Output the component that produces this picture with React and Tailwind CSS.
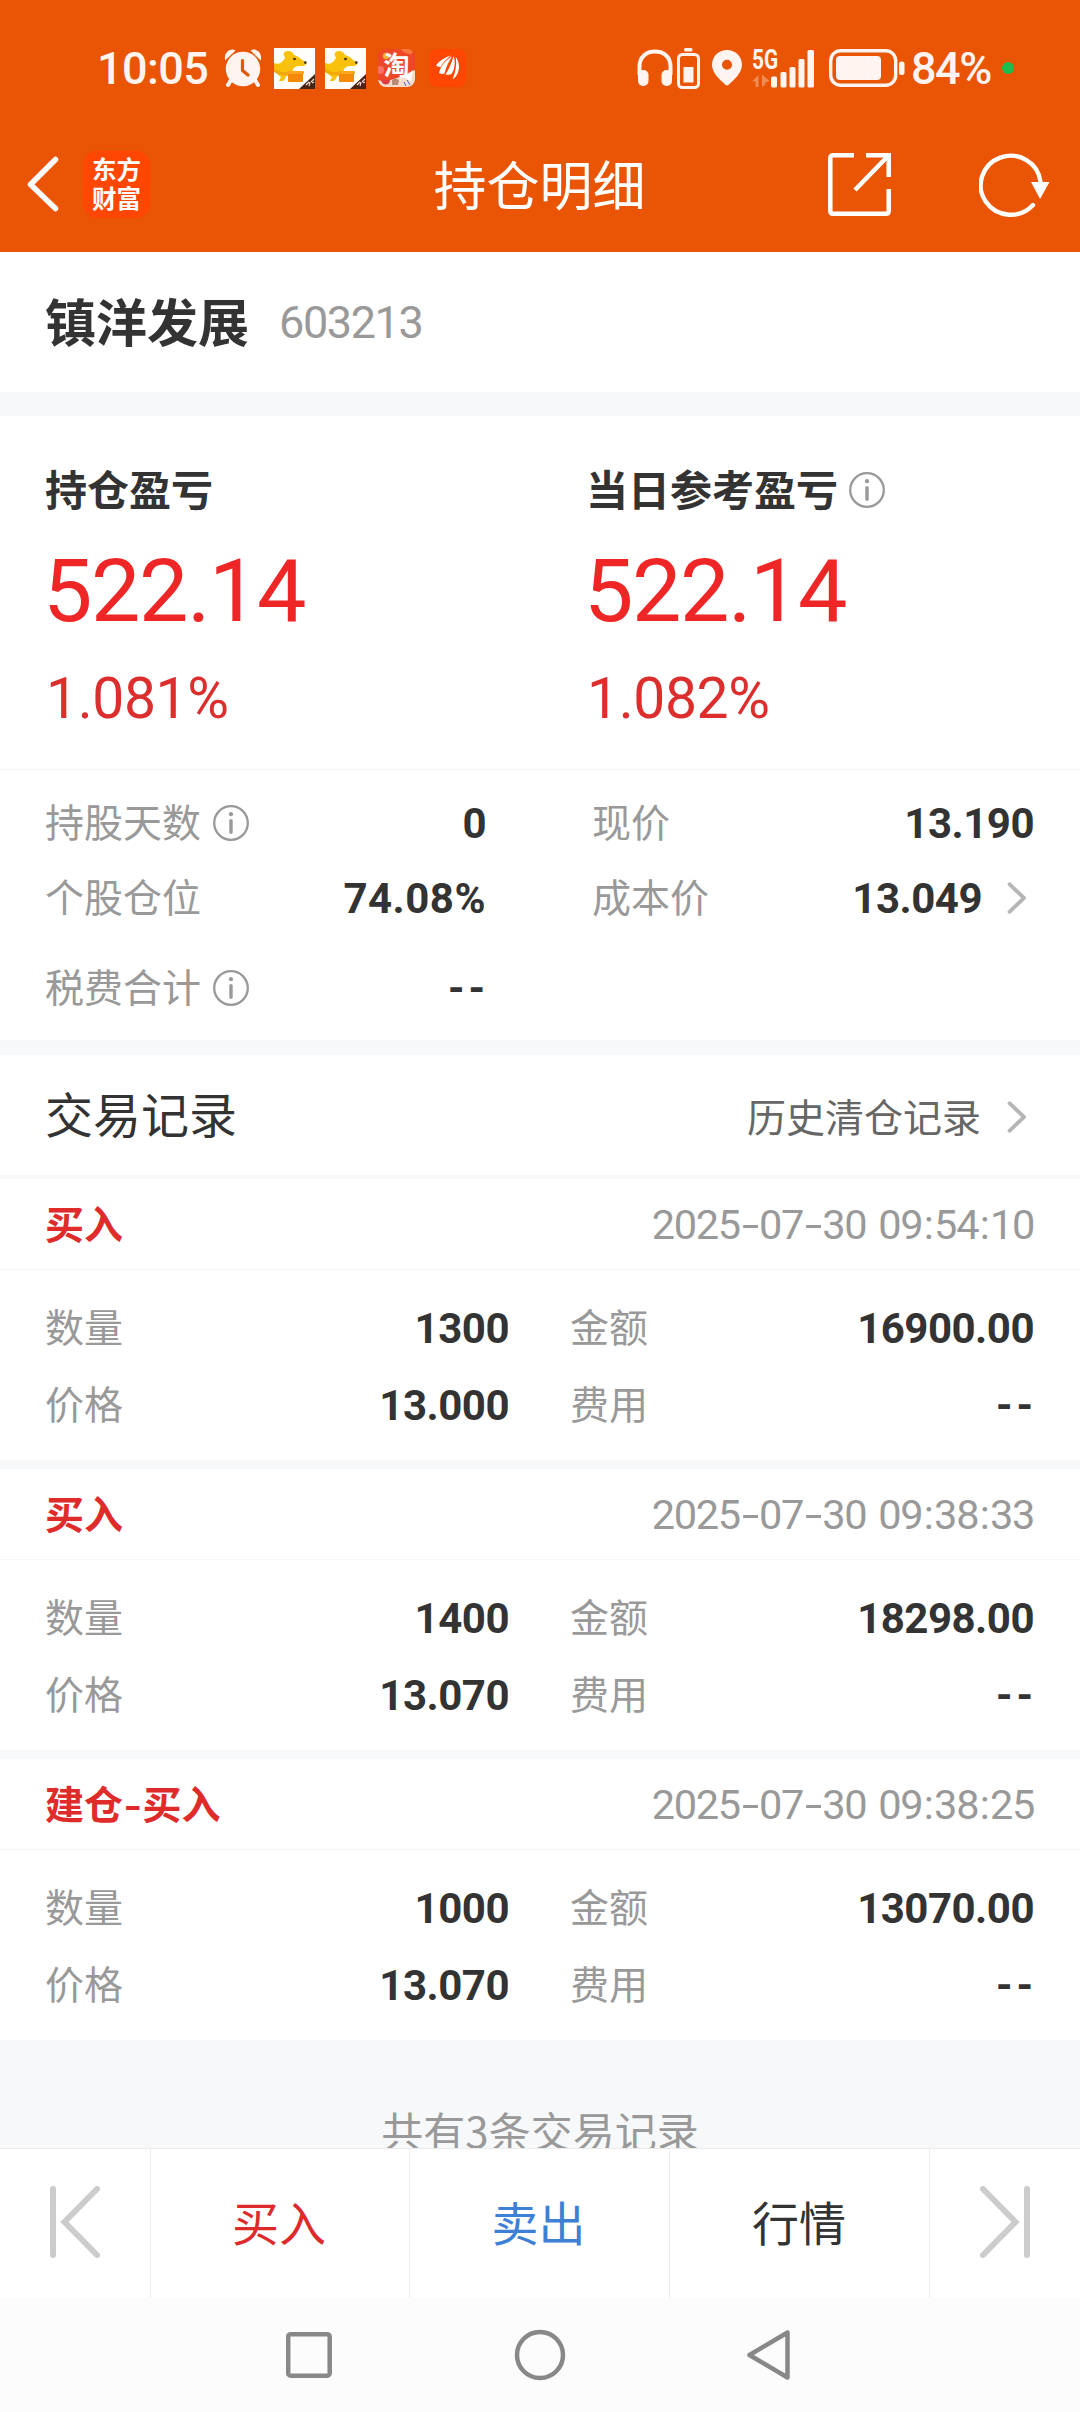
import clsx from 'clsx';

const records = [
  { id: 1, type: '买入', time: '2025-07-30 09:54:10', count: '1300', amount: '16900.00', price: '13.000', fee: '--' },
  { id: 2, type: '买入', time: '2025-07-30 09:38:33', count: '1400', amount: '18298.00', price: '13.070', fee: '--' },
  { id: 3, type: '建仓-买入', time: '2025-07-30 09:38:25', count: '1000', amount: '13070.00', price: '13.070', fee: '--' },
];

const InfoIcon = ({ className }) => (
  <svg className={clsx('h-9 w-9 shrink-0', className)} viewBox="0 0 36 36" fill="none" stroke="#999999">
    <circle cx="18" cy="18" r="16.8" strokeWidth="2.3" />
    <circle cx="18" cy="9.2" r="2.1" fill="#999999" stroke="none" />
    <path d="M18 15.6v11.6" strokeWidth="3.4" strokeLinecap="round" />
  </svg>
);

const Chevron = () => (
  <svg className="h-8 w-5 shrink-0" viewBox="0 0 20 32" fill="none" stroke="#b5b5b5" strokeWidth="3.8" strokeLinecap="round" strokeLinejoin="round">
    <path d="M2.5 2.2L17 16 2.5 29.8" />
  </svg>
);

const DogIcon = ({ className }) => (
  <svg className={clsx('h-[41px] w-[41px]', className)} viewBox="0 0 41 41">
    <rect width="41" height="41" fill="#fffefa" />
    <path d="M0 15c5 2 8 0 11-5L9.500 6.500C10 3.500 12 2.500 15 3c3 .5 4 2 5 4 4 1 6 3 8 5l4 2c1 2-1 4-4 4-4 0-6 0-8 2-2 2-2 4 1 5l-4 3-4-1c-2 3-2 4-4 6H5l2-4c-3-2-5-4-7-7z" fill="#f8c20c" />
    <path d="M0 20c6 5 10 4 15 4v4l-5-1c-4 0-7-1-10-3z" fill="#f0a90a" />
    <circle cx="20.5" cy="11" r="1.3" fill="#3b2a14" />
    <circle cx="31.3" cy="14.6" r="1.3" fill="#3b2a14" />
    <rect x="14" y="24" width="15" height="10" rx="1" fill="#f58a08" />
    <rect x="13" y="23" width="17" height="3" rx="1" fill="#fba41c" />
    <path d="M41 26v15H25z" fill="#4a2413" />
    <path d="M32 37l3-3m0 4l1-4m1 0l3-3m-2 4l2-1" stroke="#f3e4da" strokeWidth="1.1" fill="none" />
  </svg>
);

const TaobaoIcon = () => (
  <div className="relative ml-3 flex h-[38px] w-[37px] justify-center rounded-[8px] bg-[#ee4628]">
    <svg className="absolute inset-0 h-full w-full rounded-[8px]" viewBox="0 0 37 38">
      <circle cx="8" cy="7" r="3.2" fill="#f9b233" />
      <path d="M23 0h11c2 3 0 6-3 5s-6-1-8-5z" fill="#f7773b" />
      <circle cx="2" cy="21" r="4" fill="#f7706a" />
      <path d="M0 31c7 3 15-1 19-2l18-8v17H0z" fill="#f5dccb" />
      <path d="M3 31h9c0 6-8 6-9 0z" fill="#e23b46" />
      <path d="M14 31l3-2 4 2-1 5h-6z" fill="#b98b74" />
      <path d="M26 29l9-8-2 11z" fill="#fff" />
      <path d="M26 33l2 4m1-6l3 5" stroke="#4b63b8" strokeWidth="1" />
    </svg>
    <span className="relative font-['Noto_Sans_CJK_SC',sans-serif] text-[26px] leading-[30px] font-bold text-white">淘</span>
  </div>
);

const StatusBar = () => (
  <div className="flex h-[136px] items-center pl-[97px] text-[#fff4ef]">
    <span className="w-[113px] font-['Roboto',sans-serif] text-[45px] leading-none font-medium tracking-[-0.6px]">10:05</span>
    <svg className="ml-3.5 h-[38px] w-[38px]" viewBox="0 0 38 38" fill="currentColor">
      <circle cx="19" cy="20" r="17.2" />
      <path d="M1.2 11.5C-.8 3 7-1.5 11.5 1.5zM36.8 11.5C38.8 3 31-1.5 26.5 1.5z" />
      <path d="M7 31l-3 5m27-5l3 5" stroke="currentColor" strokeWidth="4" strokeLinecap="round" />
      <path d="M18.5 11.5v10l5.5 4.5" fill="none" stroke="#e95504" strokeWidth="3.2" strokeLinecap="round" strokeLinejoin="round" />
    </svg>
    <DogIcon className="ml-3" />
    <DogIcon className="ml-2.5" />
    <TaobaoIcon />
    <svg className="ml-3.5 h-[38px] w-[37px]" viewBox="0 0 37 38">
      <rect width="37" height="38" rx="8" fill="#ff4602" />
      <g fill="#fff">
        <path d="M22 6.5C16 8 10 12 7 16.5q2 1.5 4.5 1.5C14 13.5 17 10.5 22 6.500z" />
        <path d="M23 7.5C16.5 11 11.5 17 10 24q3 1.5 5.5.5C17 18 20 12 23 7.5z" />
        <path d="M24.5 7C23 13 20 20 16.5 25.5q4 1 6.500-1C26 19 26.5 12 24.5 7z" />
        <path d="M26.5 7.5C28 14 27 22 23.5 30.5 31 26 32 14 26.5 7.5z" />
      </g>
    </svg>

    <svg className="ml-[171px] h-[38px] w-[36px]" viewBox="0 0 36 38" fill="currentColor">
      <path d="M2.5 26V17.5C2.5 8 9 2.5 18 2.5S33.5 8 33.5 17.5V26" fill="none" stroke="currentColor" strokeWidth="4" />
      <rect x="1" y="21" width="10.5" height="16" rx="5" />
      <rect x="24.5" y="21" width="10.5" height="16" rx="5" />
    </svg>
    <svg className="ml-1 h-[41px] w-[23px]" viewBox="0 0 23 41" fill="currentColor">
      <rect x="7" width="8.5" height="3.5" rx="1.5" />
      <rect x="1.5" y="6.5" width="20" height="33" rx="4" fill="none" stroke="currentColor" strokeWidth="3" />
      <rect x="6.5" y="19" width="10" height="15.5" />
    </svg>
    <svg className="ml-3 h-9 w-[30px]" viewBox="0 0 30 36" fill="currentColor">
      <path fillRule="evenodd" d="M15 0C6.5 0 0 6.5 0 15c0 8.5 9 15.5 13 19.5q2 1.8 4 0C21 30.5 30 23.5 30 15 30 6.5 23.5 0 15 0zm0 9.800a5 5 0 1 1 0 10 5 5 0 0 1 0-10z" />
    </svg>
    <div className="relative ml-2.5 h-[39px] w-[64px]">
      <span className="absolute top-[-2px] left-0 origin-left scale-x-[0.77] font-['Roboto',sans-serif] text-[27px] leading-none font-bold">5G</span>
      <svg className="h-full w-full" viewBox="0 0 64 39" fill="currentColor">
        <path d="M0 32.5L6.5 26v12H3.5v-5.500zM17.5 32L10 25.5V38l3.5-2.5v-2z" opacity=".35" />
        <rect x="19" y="27.5" width="6" height="11" rx="1.5" />
        <rect x="28.5" y="23" width="6" height="15.5" rx="1.5" />
        <rect x="37.5" y="18" width="6" height="20.5" rx="1.5" />
        <rect x="46.5" y="10" width="6" height="28.5" rx="1.5" />
        <rect x="55.5" y="1" width="6.5" height="37.5" rx="1.5" />
      </svg>
    </div>
    <svg className="ml-[13px] h-[38px] w-[76px]" viewBox="0 0 76 38" fill="currentColor">
      <rect x="1.7" y="1.7" width="65" height="34.6" rx="10" fill="none" stroke="currentColor" strokeWidth="3.4" />
      <rect x="7" y="7" width="45" height="24" rx="4" />
      <rect x="70" y="12.5" width="5.5" height="13.5" rx="2.5" />
    </svg>
    <span className="ml-[6px] w-[79px] font-['Roboto',sans-serif] text-[45px] leading-none font-medium tracking-[-1.5px]">84%</span>
    <span className="ml-[12px] h-3 w-3 shrink-0 rounded-full bg-[#1cbf4f]" />
  </div>
);

const NavHeader = () => (
  <div className="grid h-[116px] grid-cols-[1fr_auto_1fr] items-start">
    <div className="flex pt-[15px] pl-[27px]">
      <svg className="mt-[5px] h-14 w-8" viewBox="0 0 32 56" fill="none" stroke="#fff" strokeWidth="5.5" strokeLinecap="round" strokeLinejoin="round">
        <path d="M28.5 3.5L3.5 28.5l25 24" />
      </svg>
      <div className="ml-6 flex h-[67px] w-[67px] flex-col items-center justify-center rounded-[14px] bg-[#ff4602] pb-1 font-['Noto_Sans_CJK_SC',sans-serif] text-[24.5px] leading-[29px] font-bold text-white">
        <span>东方</span>
        <span>财富</span>
      </div>
    </div>
    <h1 className="-ml-px pt-[21px] font-['Noto_Sans_CJK_SC',sans-serif] text-[53px] leading-[53px] text-white">持仓明细</h1>
    <div className="flex justify-end pt-[17px] pr-[30px]">
      <svg className="h-[63px] w-[63px]" viewBox="0 0 63 63" fill="none" stroke="#fff" strokeWidth="4.5">
        <path d="M26 2.3H5Q2.3 2.3 2.3 5v53q0 2.7 2.7 2.7h53q2.7 0 2.7-2.7V36" />
        <path d="M38 2.3h22.7V24M59.5 3.5L27 37" />
      </svg>
      <svg className="ml-[88px] h-16 w-[71px]" viewBox="0 0 71 64" fill="none">
        <path d="M61.5 29A30 29.5 0 1 0 54 52" stroke="#fff" strokeWidth="4.4" strokeLinecap="round" />
        <path d="M52 29h18.5L61 46z" fill="#fff" />
      </svg>
    </div>
  </div>
);

const Profit = ({ title, value, percent, info }) => (
  <div className="flex flex-col items-start">
    <div className="flex h-[42px] items-center">
      <span className="pb-1 font-['Noto_Sans_CJK_SC',sans-serif] text-[42px] leading-[42px] font-bold text-[#333333]">{title}</span>
      {info && <InfoIcon className="ml-[11px]" />}
    </div>
    <span className="mt-9 -ml-0.5 text-[88px] leading-[88px] tracking-[-1.4px] text-[#ee2626]">{value}</span>
    <span className="mt-[35px] ml-px text-[57px] leading-[57px] tracking-[-0.4px] text-[#dd2e2e]">{percent}</span>
  </div>
);

const valueTracking = (value) => {
  if (value === '--') return 'pt-[2px] tracking-[4px] -mr-[3px]';
  if (value.endsWith('%')) return 'pt-px tracking-[0.5px]';
  return 'pt-px tracking-[-0.5px]';
};

const Field = ({ label, value, info, arrow, className }) => (
  <div className={clsx('flex h-[42px] items-center', className)}>
    <span className="pb-1.5 font-['Noto_Sans_CJK_SC',sans-serif] text-[39px] leading-[39px] text-[#999999]">{label}</span>
    {info && <InfoIcon className="ml-3" />}
    <span className={clsx('ml-auto text-[42px] leading-[42px] font-bold text-[#333333]', valueTracking(value))}>{value}</span>
    {arrow && (
      <span className="mr-[7px] ml-[25px]">
        <Chevron />
      </span>
    )}
  </div>
);

// dashes and colons get a little more room than the digits
const TradeTime = ({ time }) => (
  <span className="text-[41.5px] leading-[41px] tracking-[-1.3px] whitespace-pre text-[#999999]">
    {time.split(/([-: ])/).map((part, i) => (
      <span key={i} className={clsx(part === '-' && 'inline-block scale-x-150 px-[4.5px]', (part === ':' || part === ' ') && 'px-[1.5px]')}>
        {part}
      </span>
    ))}
  </span>
);

const TradeRecord = ({ record, last }) => (
  <div className={clsx('bg-white', last ? 'h-[281px]' : 'h-[290px] border-b-[9px] border-[#f6f8fa]')}>
    <div className="flex h-[91px] items-center justify-between border-b border-[#f5f6f7] pr-[46px] pl-[45px]">
      <span className="pb-1 font-['Noto_Sans_CJK_SC',sans-serif] text-[39px] leading-[39px] font-bold text-[#e02b2b]">
        {record.type.split(/(-)/).map((part, i) => (
          <span key={i} className={clsx(part === '-' && 'inline-block scale-x-125 px-[2.5px]')}>
            {part}
          </span>
        ))}
      </span>
      <TradeTime time={record.time} />
    </div>
    <div className="grid grid-cols-[464px_464px] justify-between gap-y-[35px] pt-[37px] pr-[46px] pl-[45px]">
      <Field label="数量" value={record.count} />
      <Field label="金额" value={record.amount} />
      <Field label="价格" value={record.price} />
      <Field label="费用" value={record.fee} />
    </div>
  </div>
);

const BottomBar = () => (
  <div className="grid h-[150px] shrink-0 grid-cols-[151px_259px_260px_260px_150px] divide-x divide-[#ebebeb] border-t border-[#ebebeb] bg-white font-['Noto_Sans_CJK_SC',sans-serif] text-[47px] leading-[47px]">
    <button className="flex items-center justify-center pb-[3px]">
      <svg className="h-[72px] w-[50px]" viewBox="0 0 50 72" fill="none" stroke="#cccccc" strokeWidth="6" strokeLinecap="round">
        <path d="M3 3v66M47 3L14.5 36 47 69" />
      </svg>
    </button>
    <button className="pr-0.5 pb-1.5 text-[#dd2b2b]">买入</button>
    <button className="pr-0.5 pb-1.5 text-[#3d80d6]">卖出</button>
    <button className="pr-px pb-1.5 text-[#333333]">行情</button>
    <button className="flex items-center justify-center pb-[3px]">
      <svg className="h-[72px] w-[50px]" viewBox="0 0 50 72" fill="none" stroke="#cccccc" strokeWidth="6" strokeLinecap="round">
        <path d="M47 3v66M3 3l32.5 33L3 69" />
      </svg>
    </button>
  </div>
);

const SystemNav = () => (
  <div className="flex h-[114px] shrink-0 items-center bg-[#fcfcfc] pl-[286px]">
    <svg className="h-[52px] w-[46px]" viewBox="0 0 46 52" fill="none" stroke="#888888" strokeWidth="4.5">
      <rect x="2.2" y="5.2" width="41.5" height="41.5" rx="2.5" />
    </svg>
    <svg className="ml-[182px] h-[52px] w-[52px]" viewBox="0 0 52 52" fill="none" stroke="#888888" strokeWidth="4.5">
      <circle cx="26" cy="26" r="23" />
    </svg>
    <svg className="ml-[180px] h-[52px] w-[46px]" viewBox="0 0 46 52" fill="none" stroke="#888888" strokeWidth="4.5" strokeLinejoin="round">
      <path d="M41.5 3.5v45L3.5 26z" />
    </svg>
  </div>
);

export default function App() {
  return (
    <div className="flex h-[2412px] w-[1080px] flex-col overflow-hidden bg-[#f6f8fa] font-['Roboto','Noto_Sans_CJK_SC',sans-serif]">
      <header className="h-[252px] shrink-0 bg-[#e95504]">
        <StatusBar />
        <NavHeader />
      </header>

      <main className="flex min-h-0 flex-1 flex-col overflow-hidden">
        <section className="flex h-[140px] shrink-0 items-center bg-white px-[45px]">
          <h2 className="pb-1 font-['Noto_Sans_CJK_SC',sans-serif] text-[51px] leading-[51px] font-bold text-[#333333]">镇洋发展</h2>
          <span className="ml-[30px] text-[45px] leading-[45px] tracking-[-1.4px] text-[#999999]">603213</span>
        </section>

        <section className="mt-6 h-[624px] shrink-0 bg-white">
          <div className="grid h-[354px] grid-cols-[541px_1fr] border-b border-[#f5f6f7] pt-[53px] pl-[45px]">
            <Profit title="持仓盈亏" value="522.14" percent="1.081%" />
            <Profit title="当日参考盈亏" value="522.14" percent="1.082%" info />
          </div>
          <div className="grid grid-cols-[441px_442px] justify-between pt-8 pr-[46px] pl-[45px]">
            <Field label="持股天数" value="0" info />
            <Field label="现价" value="13.190" />
            <Field className="mt-[33px]" label="个股仓位" value="74.08%" />
            <Field className="mt-[33px]" label="成本价" value="13.049" arrow />
            <Field className="mt-12" label="税费合计" value="--" info />
          </div>
        </section>

        <section className="mt-[15px] flex h-[120px] shrink-0 items-center justify-between bg-white pr-[53px] pl-[45px] font-['Noto_Sans_CJK_SC',sans-serif]">
          <h3 className="pb-1.5 text-[48px] leading-[48px] text-[#333333]">交易记录</h3>
          <div className="flex items-center text-[39px] leading-[39px] text-[#666666]">
            历史清仓记录
            <span className="ml-[26px] pt-[3px]">
              <Chevron />
            </span>
          </div>
        </section>

        <section className="mt-1 shrink-0">
          {records.map((record, index) => (
            <TradeRecord key={record.id} record={record} last={index === records.length - 1} />
          ))}
        </section>

        <p className="mt-[69px] shrink-0 text-center font-['Noto_Sans_CJK_SC',sans-serif] text-[42px] leading-[42px] text-[#999999]">共有3条交易记录</p>
      </main>

      <BottomBar />
      <SystemNav />
    </div>
  );
}
